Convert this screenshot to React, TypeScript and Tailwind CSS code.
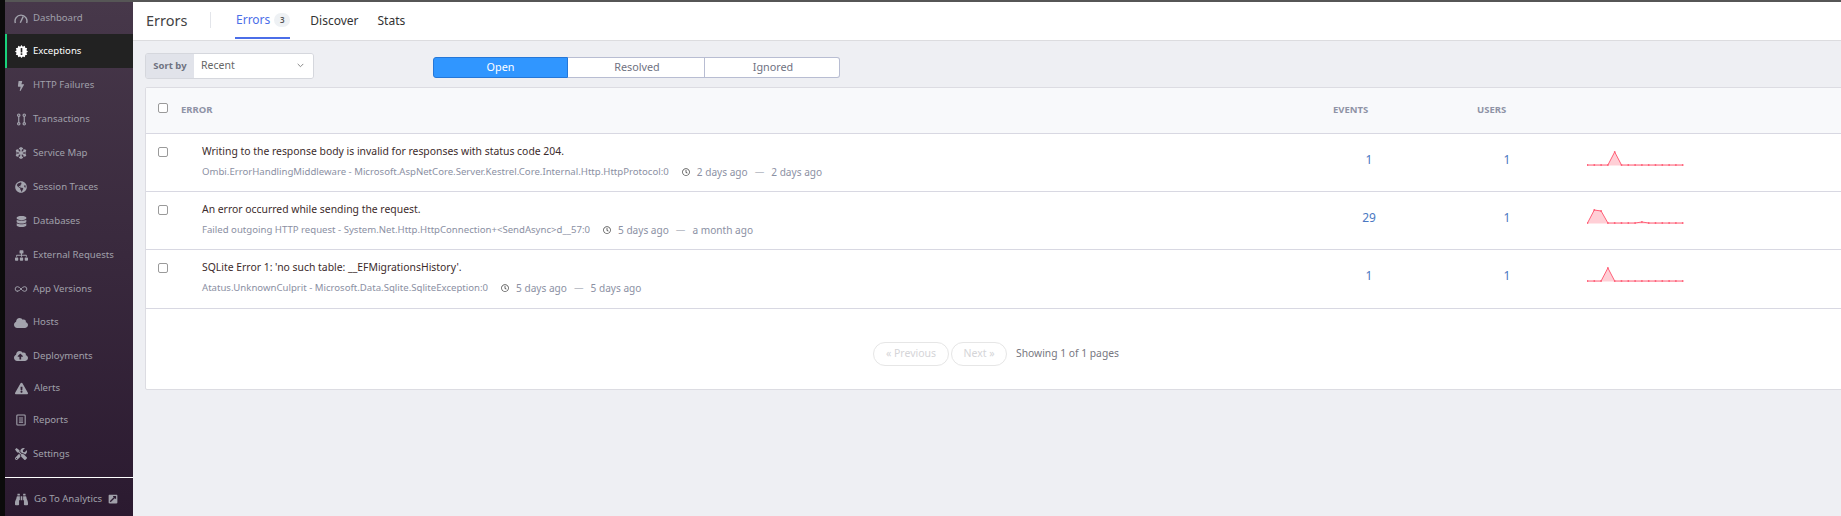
import React from "react";
import { Infinity as InfinityIcon } from "lucide-react";
import { FaBolt, FaDatabase, FaCloud, FaCloudUploadAlt, FaExclamationTriangle, FaTools, FaBinoculars, FaSnowflake, FaSitemap, FaGlobeAmericas, FaRegClock, FaExternalLinkSquareAlt } from "react-icons/fa";

const Gauge = () => (
  <svg viewBox="0 0 16 12" className="w-[14px] h-[11px]" fill="none" stroke="#a3a3ad">
    <path d="M1.6 11.2A6.8 6.8 0 1 1 14.4 11.2" strokeWidth="1.6" />
    <path d="M7.2 10.8 10.6 3.6" strokeWidth="1.6" />
  </svg>
);
const Burst = () => (
  <svg viewBox="0 0 16 16" className="w-[13px] h-[13px]">
    <path fill="#fff" d="M8 0l1.6 2 2.4-1 .5 2.5 2.5.5-1 2.4L16 8l-2 1.6 1 2.4-2.5.5-.5 2.5-2.4-1L8 16l-1.6-2-2.4 1-.5-2.5-2.5-.5 1-2.4L0 8l2-1.6L1 4l2.5-.5L4 1l2.4 1z" />
    <rect x="7" y="3.8" width="2" height="5.4" fill="#222" />
    <rect x="7" y="10.2" width="2" height="2" fill="#222" />
  </svg>
);
const Route = () => (
  <svg viewBox="0 0 14 16" className="w-[11px] h-[13px]" fill="none" stroke="#a3a3ad" strokeWidth="1.5">
    <circle cx="3.5" cy="2.5" r="1.5" /><path d="M3.5 4v8" /><circle cx="3.5" cy="13.5" r="1.5" />
    <circle cx="10.5" cy="2.5" r="1.5" /><path d="M10.5 4v8" /><circle cx="10.5" cy="13.5" r="1.5" />
  </svg>
);
const Report = () => (
  <svg viewBox="0 0 12 14" className="w-[10px] h-[12px]" fill="none" stroke="#a3a3ad" strokeWidth="1.3">
    <rect x="1" y="1" width="10" height="12" rx="1" /><path d="M3.5 4.5h5M3.5 7h5M3.5 9.5h5" />
  </svg>
);

const nav: { label: string; icon: React.ReactNode; rowClass: string; labelClass?: string; active?: boolean }[] = [
  { label: "Dashboard", icon: <Gauge />, rowClass: "h-[32px]" },
  { label: "Exceptions", icon: <Burst />, rowClass: "h-[34px]", active: true },
  { label: "HTTP Failures", icon: <FaBolt size={10} />, rowClass: "h-[35px]" },
  { label: "Transactions", icon: <Route />, rowClass: "h-[33px]" },
  { label: "Service Map", icon: <FaSnowflake size={12} />, rowClass: "h-[34px]" },
  { label: "Session Traces", icon: <FaGlobeAmericas size={12} />, rowClass: "h-[34px]" },
  { label: "Databases", icon: <FaDatabase size={11} />, rowClass: "h-[34px]" },
  { label: "External Requests", icon: <FaSitemap size={13} />, rowClass: "h-[34px]" },
  { label: "App Versions", icon: <InfinityIcon size={14} strokeWidth={1.6} />, rowClass: "h-[34px]" },
  { label: "Hosts", icon: <FaCloud size={14} />, rowClass: "h-[33px]" },
  { label: "Deployments", icon: <FaCloudUploadAlt size={14} />, rowClass: "h-[34px]" },
  { label: "Alerts", icon: <FaExclamationTriangle size={13} />, rowClass: "h-[30px]", labelClass: "ml-[1px]" },
  { label: "Reports", icon: <Report />, rowClass: "h-[34px]" },
  { label: "Settings", icon: <FaTools size={12} />, rowClass: "h-[34px]" },
];

const Box = () => <span className="block w-[10px] h-[10px] border border-[#9a9a9a] rounded-[2px] bg-white" />;

const W = 98, STEP = 6.8;
const Spark = ({ values }: { values: number[] }) => {
  const pts = values.map((v, i) => [i * STEP + 0.5, 14 - v] as const);
  const line = pts.map((p) => p.join(",")).join(" ");
  return (
    <svg width={W} height={18} className="block">
      <polygon points={`0.5,14.5 ${line} 95.7,14.5`} fill="#ffcfd6" />
      <polyline points={line} fill="none" stroke="#ff6078" strokeWidth="1" />
      {pts.map((p, i) => <circle key={i} cx={p[0]} cy={p[1]} r="0.9" fill="#ff6078" />)}
    </svg>
  );
};

const rows = [
  { title: "Writing to the response body is invalid for responses with status code 204.", sub: "Ombi.ErrorHandlingMiddleware - Microsoft.AspNetCore.Server.Kestrel.Core.Internal.Http.HttpProtocol:0", a: "2 days ago", b: "2 days ago", ev: "1", spark: [0,0,0,0,13,0,0,0,0,0,0,0,0,0,0], h: "h-[58px]" },
  { title: "An error occurred while sending the request.", sub: "Failed outgoing HTTP request - System.Net.Http.HttpConnection+<SendAsync>d__57:0", a: "5 days ago", b: "a month ago", ev: "29", spark: [0,13,12,0,0,0,0,0,1,0,0,0,0,0,0], h: "h-[58px]" },
  { title: "SQLite Error 1: 'no such table: __EFMigrationsHistory'.", sub: "Atatus.UnknownCulprit - Microsoft.Data.Sqlite.SqliteException:0", a: "5 days ago", b: "5 days ago", ev: "1", spark: [0,0,0,13,0,0,0,0,0,0,0,0,0,0,0], h: "h-[59px]" },
];

export default function App() {
  return (
    <div className="flex h-[516px] w-[1841px] overflow-hidden bg-[#eeeff3] font-['Noto_Sans','Open_Sans',sans-serif]">
      <div className="w-[5px] shrink-0 bg-[#0b0b0b]" />
      <aside className="w-[128px] shrink-0 flex flex-col border-t-2 border-[#565656] bg-gradient-to-b from-[#47384a] to-[#2b1a30] text-[9.6px] text-[#a0a0aa]">
        <nav className="flex flex-col pb-[6px]">
          {nav.map((n) => (
            <div key={n.label} className={`${n.rowClass} flex items-center gap-[4px] ${n.active ? "bg-[#222222] text-white border-l-2 border-[#19d27c] pl-[6px]" : "pl-[8px]"}`}>
              <span className={`w-[16px] flex justify-center ${n.active ? "text-white" : "text-[#a3a3ad]"}`}>{n.icon}</span>
              <span className={`whitespace-nowrap ${n.labelClass ?? ""}`}>{n.label}</span>
            </div>
          ))}
        </nav>
        <div className="border-t border-white flex-1 flex items-center pl-[8px] pt-[4px] gap-[5px]">
          <span className="w-[16px] flex justify-center"><FaBinoculars size={13} /></span>
          <span className="whitespace-nowrap">Go To Analytics</span>
          <FaExternalLinkSquareAlt className="ml-[1px] text-[10px]" />
        </div>
      </aside>

      <main className="flex-1 min-w-0 flex flex-col overflow-hidden border-t-2 border-[#565656]">
        <header className="h-[39px] shrink-0 bg-white border-b border-[#dcdcdf] flex items-stretch pl-[13px]">
          <div className="flex items-center w-[65px] text-[14.5px] text-[#444] relative">
            Errors
            <span className="absolute right-0 top-[10px] h-[16px] w-px bg-[#e3e5ea]" />
          </div>
          <div className="ml-[24px] flex gap-[20px] text-[12px] text-[#333]">
            <div className="flex items-center gap-[4px] text-[#4b6ee8] border-b-2 border-[#4b6ee8] mb-px pl-px">
              Errors
              <span className="w-[16px] h-[14px] rounded-full bg-[#eef1f4] text-[#555] text-[8px] font-semibold flex items-center justify-center">3</span>
            </div>
            <div className="flex items-center">Discover</div>
            <div className="flex items-center ml-[-1px]">Stats</div>
          </div>
        </header>

        <div className="pl-[12px]">
          <div className="flex items-start h-[46px] pt-[12px]">
            <div className="flex h-[26px] w-[169px] rounded-[3px] border border-[#d5d7dd] overflow-hidden">
              <div className="w-[48px] bg-[#e1e3ea] text-[#6f7280] text-[9.5px] font-bold flex items-center justify-center">Sort by</div>
              <div className="flex-1 bg-white text-[10.5px] text-[#666] flex items-center justify-between pl-[7px] pr-[9px] pb-px">
                Recent
                <svg width="7" height="5" viewBox="0 0 7 5" fill="none" stroke="#888" strokeWidth="1"><path d="M.7.9 3.5 3.7 6.3.9" /></svg>
              </div>
            </div>
            <div className="ml-[119px] mt-[4px] flex h-[21px] w-[407px] text-[10.8px]">
              <div className="w-[135px] rounded-l-[3px] bg-[#3096ff] border border-[#2577d8] text-white flex items-center justify-center pb-px">Open</div>
              <div className="w-[137px] bg-white border-y border-r border-[#b8bdd2] text-[#6f7282] flex items-center justify-center pb-px pl-[2px]">Resolved</div>
              <div className="w-[135px] rounded-r-[3px] bg-white border-y border-r border-[#b8bdd2] text-[#6f7282] flex items-center justify-center pb-px pl-[2px]">Ignored</div>
            </div>
          </div>

          <section className="bg-white border border-[#dcdce2] rounded-[2px] h-[303px] flex flex-col mr-[-2px]">
            <div className="h-[46px] shrink-0 bg-[#f8f9fb] border-b border-[#d8d8e2] flex items-center text-[9.5px] font-bold text-[#8f93a6]">
              <div className="pl-[12px] w-[35px] mb-[5px]"><Box /></div>
              <div className="w-[1152px]">ERROR</div>
              <div className="w-[144px]">EVENTS</div>
              <div>USERS</div>
            </div>
            {rows.map((r) => (
              <div key={r.title} className={`${r.h} shrink-0 border-b border-[#d8d8e2] flex items-start`}>
                <div className="pl-[12px] w-[56px] pt-[13px]"><Box /></div>
                <div className="w-[1142px] min-w-0 pt-[9px]">
                  <div className="text-[10.4px] text-[#3c2b2b] leading-[16px]">{r.title}</div>
                  <div className="mt-[6px] flex items-center text-[9.6px] text-[#8b90a3] leading-[14px]">
                    <span>{r.sub}</span>
                    <FaRegClock className="ml-[13px] text-[8px] text-[#555]" />
                    <span className="ml-[7px] text-[10.1px]">{r.a}</span>
                    <span className="mx-[7px]">—</span>
                    <span className="text-[10.1px]">{r.b}</span>
                  </div>
                </div>
                <div className="w-[50px] pt-[18px] leading-[16px] text-center text-[12px] text-[#4a78c2]">{r.ev}</div>
                <div className="w-[50px] ml-[88px] pt-[18px] leading-[16px] text-center text-[12px] text-[#4a78c2]">1</div>
                <div className="ml-[55px] pt-[17px]"><Spark values={r.spark} /></div>
              </div>
            ))}
            <div className="flex-1 flex items-center justify-center pl-[4px] pt-[10px] text-[10.5px]">
              <div className="flex items-center gap-[2px]">
                <span className="h-[24px] w-[76px] rounded-full border border-[#e6e6e6] text-[#d5d5d8] flex items-center justify-center">« Previous</span>
                <span className="h-[24px] w-[56px] rounded-full border border-[#e6e6e6] text-[#d5d5d8] flex items-center justify-center">Next »</span>
                <span className="ml-[7px] text-[10.3px] text-[#77777f]">Showing 1 of 1 pages</span>
              </div>
            </div>
          </section>
        </div>
      </main>
    </div>
  );
}
